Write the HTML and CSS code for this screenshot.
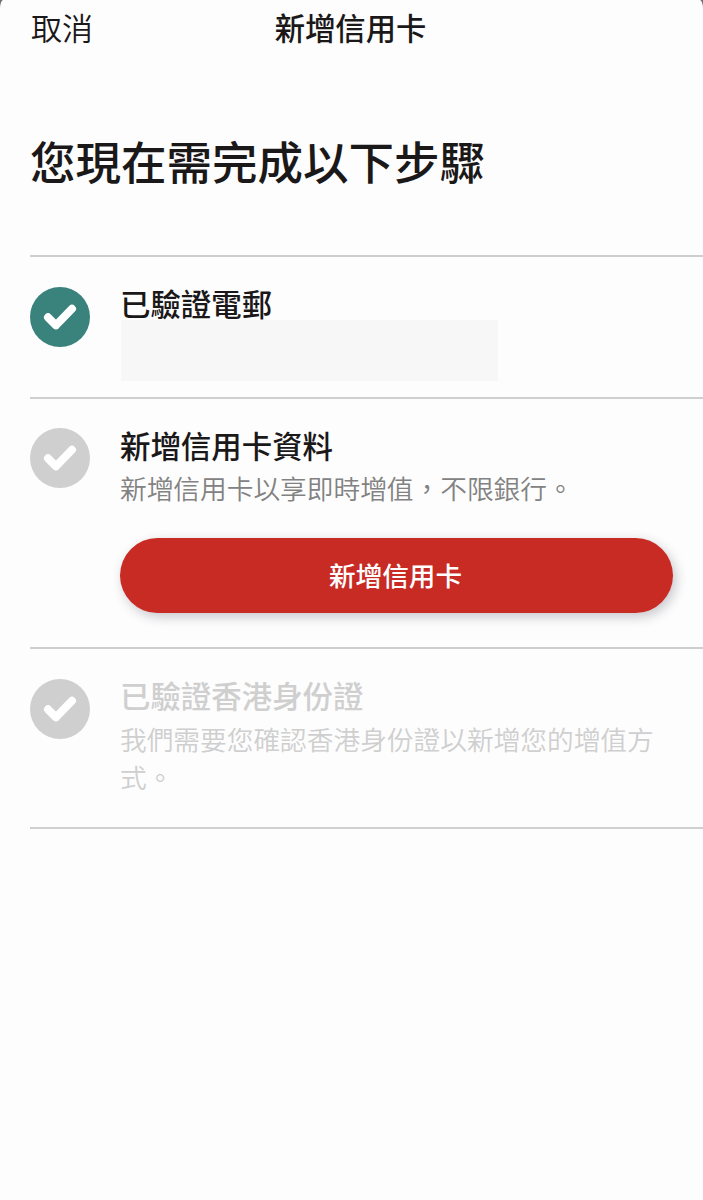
FILE: index.html
```html
<!DOCTYPE html>
<html lang="zh-HK">
<head>
<meta charset="utf-8">
<title>新增信用卡</title>
<link rel="stylesheet" href="styles.css">
</head>
<body>
<main class="sheet">
  <header class="nav">
    <span class="cancel">取消</span>
    <span class="nav-title">新增信用卡</span>
    <span></span>
  </header>
  <h1 class="heading">您現在需完成以下步驟</h1>
  <ul class="steps">
    <li class="step step-email">
      <svg class="check done" viewBox="0 0 60 60"><circle cx="30" cy="30" r="30"/><path d="M18 30.300L26 38.300L42 21.800"/></svg>
      <div class="body">
        <h2 class="title">已驗證電郵</h2>
        <div class="redacted"></div>
      </div>
    </li>
    <li class="step step-card">
      <svg class="check" viewBox="0 0 60 60"><circle cx="30" cy="30" r="30"/><path d="M18 30.300L26 38.300L42 21.800"/></svg>
      <div class="body">
        <h2 class="title">新增信用卡資料</h2>
        <p class="text">新增信用卡以享即時增值，不限銀行。</p>
        <button class="button">新增信用卡</button>
      </div>
    </li>
    <li class="step step-id">
      <svg class="check" viewBox="0 0 60 60"><circle cx="30" cy="30" r="30"/><path d="M18 30.300L26 38.300L42 21.800"/></svg>
      <div class="body">
        <h2 class="title">已驗證香港身份證</h2>
        <p class="text">我們需要您確認香港身份證以新增您的增值方式。</p>
      </div>
    </li>
  </ul>
</main>
</body>
</html>
```
FILE: styles.css
```css
* { box-sizing: border-box; margin: 0; padding: 0; }
body {
  background: #6e6e6e;
  color: #1b1819;
  font-family: "Noto Sans CJK TC", sans-serif;
}
.sheet {
  height: 1200px;
  overflow: hidden;
  background: #fdfdfd;
  border-radius: 3px 3px 0 0 / 9px 9px 0 0;
}
.nav {
  display: grid;
  grid-template-columns: 1fr auto 1fr;
  height: 54px;
  padding: 0 32px 0 30px;
  line-height: 54px;
}
.cancel { padding-left: 1px; font-size: 31px; font-weight: 350; }
.nav-title { font-size: 30.300px; font-weight: 500; }
.heading {
  margin-top: 72px;
  padding-left: 30px;
  font-size: 45.500px;
  font-weight: 500;
  line-height: 68px;
}
.steps {
  margin: 61px 0 0 30px;
  border-top: 2px solid #cfcfcf;
  list-style: none;
}
.step {
  display: flex;
  gap: 30px;
  padding: 30px 30px 0 0;
  border-bottom: 2px solid #cfcfcf;
}
.step-email { height: 142px; }
.step-card { height: 250px; padding-top: 29px; }
.step-id { height: 180px; color: #cfcfcf; }
.check { flex: none; width: 60px; height: 60px; fill: #cfcfcf; }
.check path {
  fill: none;
  stroke: #fff;
  stroke-width: 8;
  stroke-linecap: round;
  stroke-linejoin: round;
}
.done { fill: #3a827c; }
.body { flex: 1; }
.title { font-size: 30.450px; font-weight: 500; line-height: 32px; }
.step-card .title { padding-top: 1px; }
.text { margin-top: 9px; font-size: 26.700px; font-weight: 350; line-height: 38px; color: #828282; }
.step-card .text { margin-top: 8px; }
.step-id .text { color: inherit; }
.redacted { width: 377px; height: 61px; margin: 1px 0 0 1px; background: #f7f7f7; }
.button {
  display: block;
  width: 100%;
  height: 75px;
  margin-top: 31px;
  padding: 0 2px 2px 0;
  border: 0;
  border-radius: 38px;
  background: #c82a24;
  color: #fff;
  font: 500 26.600px/73px "Noto Sans CJK TC", sans-serif;
  box-shadow: 3px 4px 12px rgba(30, 30, 50, .24);
}
```
